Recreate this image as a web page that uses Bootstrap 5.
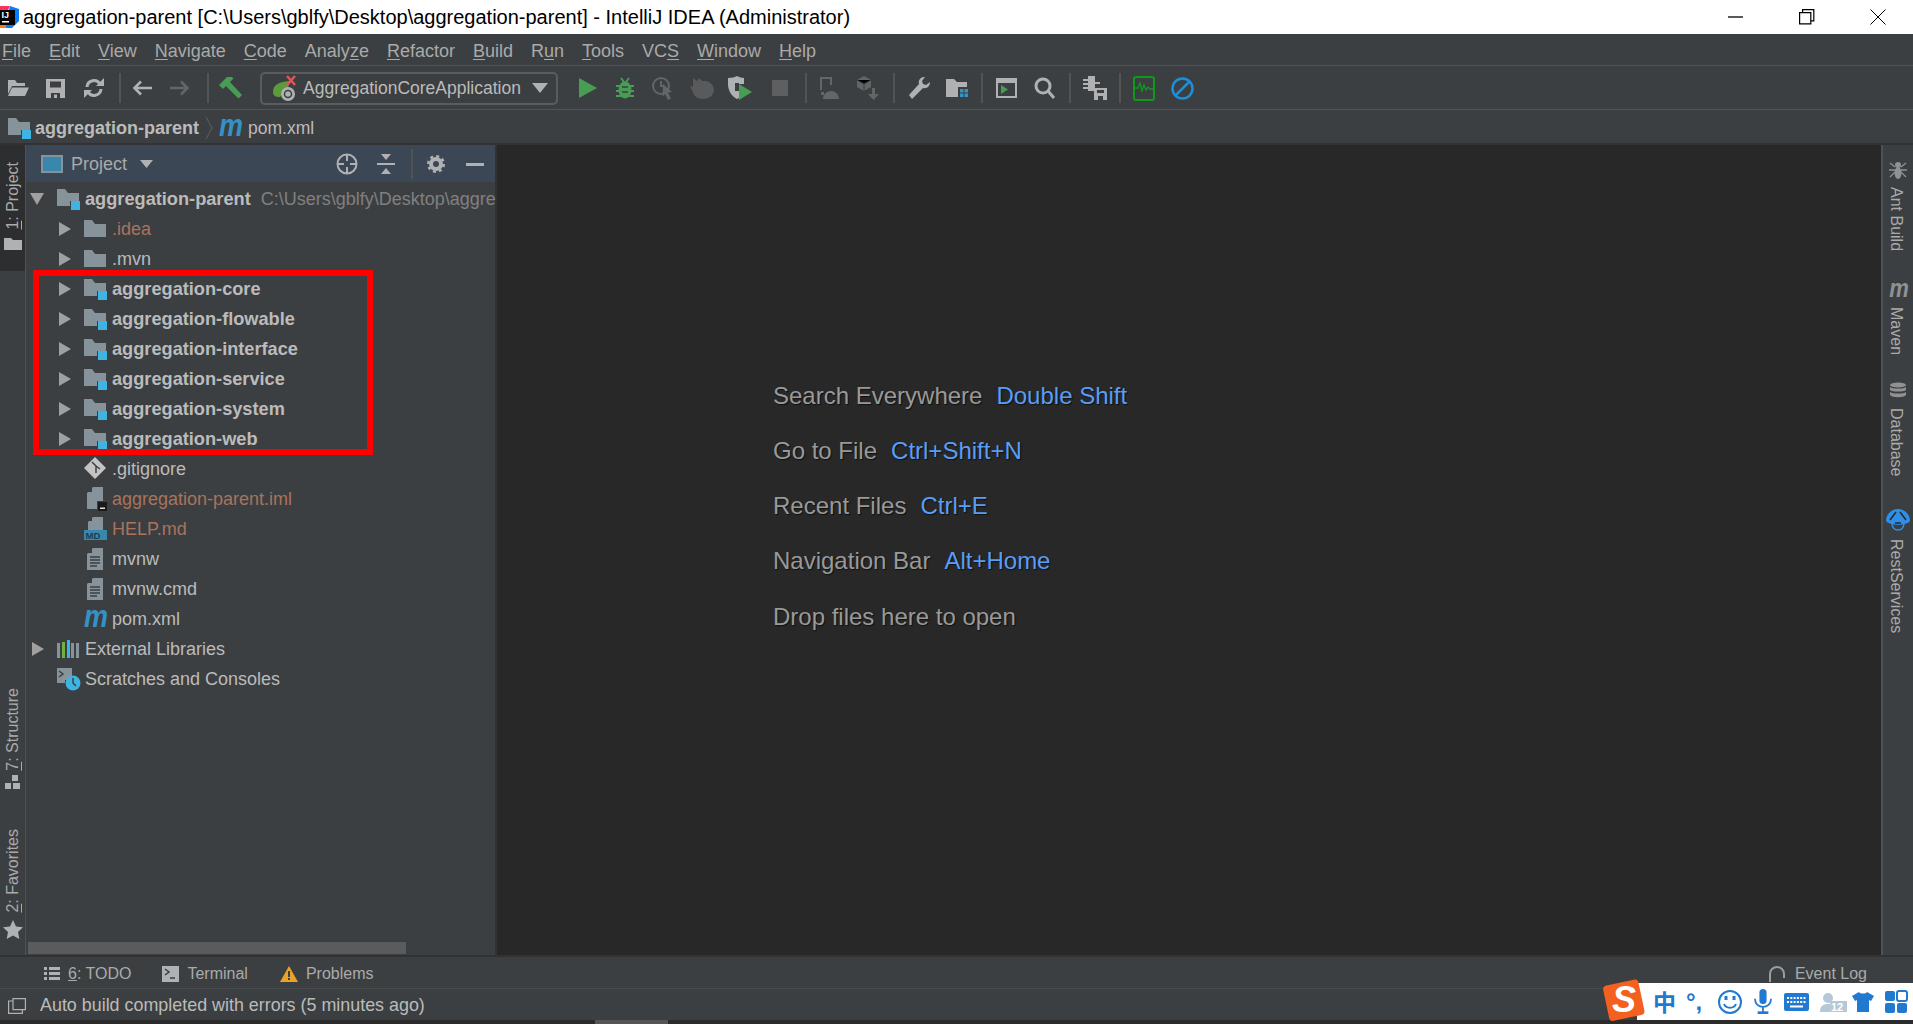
<!DOCTYPE html>
<html lang="en">
<head>
<meta charset="UTF-8">
<title>aggregation-parent - IntelliJ IDEA</title>
<link href="https://cdn.jsdelivr.net/npm/bootstrap@5.3.0/dist/css/bootstrap.min.css" rel="stylesheet">
<style>
body { background: #3c3f41; color: #bbb; font-family: "Liberation Sans", Arial, sans-serif; font-size: 18px; }
svg { display: block; flex: none; overflow: visible; }
.title-bar { height: 34px; background: #fff; color: #000; font-size: 20px; }
.title-bar .win { width: 71px; }
.menu-bar { height: 32px; border-bottom: 1px solid #515354; font-size: 18px; color: #aaa; gap: 18px; padding: 3px 0 0 2px; }
.menu-bar u { text-underline-offset: 2px; }
.tool-bar { height: 44px; border-bottom: 1px solid #515354; padding-top: 1px; }
.tb { height: 100%; display: flex; align-items: center; justify-content: center; }
.w32 { width: 32px; } .w34 { width: 34px; } .w36 { width: 36px; } .w38 { width: 38px; } .w40 { width: 40px; } .w44 { width: 44px; }
.sep { width: 2px; height: 30px; background: #515354; margin: 0 5px; flex: none; }
.combo { width: 298px; height: 33px; border: 2px solid #5a5d5f; border-radius: 5px; margin-left: 12px; margin-right: 12px; padding-left: 10px; font-size: 17.5px; color: #bbb; flex: none; }
.nav-strip { height: 30px; padding: 3px 0 0 8px; border-bottom: 2px solid #323232; box-sizing: content-box; font-size: 18px; }
.nav-strip b { margin-left: 3px; }
.nav-strip span { font-size: 17.5px; }
.nav-chevron { margin-left: 6px; margin-right: 6px; }
.nav-m { margin-right: 3px; }
.main-area { min-height: 0; }
.left-strip { width: 26px; border-right: 1px solid #4f5254; flex: none; }
.right-strip { width: 32px; border-left: 2px solid #4f5254; flex: none; padding-top: 16px; padding-left: 6px; }
.side-btn { writing-mode: vertical-rl; font-size: 16px; color: #aaa; line-height: 20px; white-space: nowrap; }
.left-strip .side-btn { transform: rotate(180deg); }
.right-strip .side-btn { margin-left: -3px; }
.left-active { background: #2c2e2f; padding-top: 17px; height: 126px; }
.struct-ico { margin-top: 5px; }
.fav-gap { margin-top: 40px; }
.star { margin-top: 7px; }
.r-maven { margin: 30px 0 8px; }
.r-db { margin: 27px 0 8px; }
.r-rest { margin: 32px 0 8px -3px; }
.panel { width: 471px; flex: none; border-right: 2px solid #323232; }
.panel-head { height: 37px; background: #3c4755; padding: 1px 0 0 15px; font-size: 18px; color: #aaa; }
.head-caret { margin-left: 13px; }
.head-locate { margin-left: 183px; }
.head-collapse { margin-left: 19px; }
.head-sep { margin: 0 14px 0 16px; }
.head-min { margin-left: 21px; }
.tree { padding-top: 2px; }
.tree li { height: 30px; white-space: nowrap; }
.tree b { font-size: 18.2px; padding-top: 1px; }
.lv0 { padding-left: 4px; }
.lv0-plain { padding-left: 31px; }
.lv1 { padding-left: 33px; }
.leaf { padding-left: 58px; }
.arr { width: 25px; flex: none; }
.lv0 .arr { width: 27px; }
.ico { width: 28px; flex: none; }
.muted-path { color: #808080; margin-left: 10px; }
.ignored { color: #a9735d; }
.mark-box { position: absolute; left: 7px; top: 88px; width: 340px; height: 185px; border: 6px solid #f00; pointer-events: none; }
.h-scroll { height: 12px; width: 378px; background: #595b5d; margin: auto 0 1px 2px; }
.editor { background: #282828; padding: 222.5px 0 0 276px; font-size: 24px; color: #999; text-shadow: 1px 1px 1px #111; }
.editor p { height: 55.3px; line-height: 55.3px; margin: 0; }
.editor span { color: #589df6; margin-left: 14px; }
.bottom-bar { height: 33px; border-top: 2px solid #323232; font-size: 16px; color: #aaa; padding: 2px 0 0 44px; flex: none; }
.bottom-gap { margin-left: 31px; }
.bottom-gap-2 { margin-left: 32px; }
.status-bar { height: 32px; border-top: 1px solid #494b4d; padding: 2px 0 0 8px; font-size: 17.9px; flex: none; }
.status-text { margin-left: 14px; }
.floor { height: 4px; background: #2b2b2b; flex: none; padding-left: 595px; }
.floor div { width: 73px; background: #555; }
.event-log { margin-left: auto; margin-right: 46px; }
.sogou { position: absolute; right: 0; bottom: 4px; width: 276px; height: 37px; background: #fff; color: #2179d0; padding-left: 16px; gap: 11px; }
.sogou b { font-family: "Noto Sans CJK SC", sans-serif; font-size: 23px; width: 22px; line-height: 1; }
.sogou .punct { width: 21px; font-size: 24px; font-weight: 700; line-height: 1; white-space: nowrap; }
.sogou .shirt { margin-left: -6px; }
.sogou-logo { position: absolute; left: -34px; top: -4px; }
</style>
</head>
<body class="vh-100 overflow-hidden d-flex flex-column position-relative">

<svg width="0" height="0" class="position-absolute">
  <symbol id="module" viewBox="0 0 24 22"><path fill="#87939a" d="M0 1H8l3 4h11v8H13v5H0z"/><rect x="14" y="13" width="9" height="9" fill="#3fb4e3"/></symbol>
  <symbol id="folder" viewBox="0 0 24 22"><path fill="#87939a" d="M0 2H8l3 4h11v13H0z"/></symbol>
  <symbol id="right" viewBox="0 0 12 14"><path fill="#a0a0a0" d="M0 0l12 7-12 7z"/></symbol>
  <symbol id="doc" viewBox="0 0 24 24"><path fill="#87939a" d="M3 7L9 1h10v22H3z"/><path fill="#3c3f41" d="M3 6L8 1v5z"/><path stroke="#3c3f41" stroke-width="1.600" d="M6 10h10M6 13h10M6 16h10M6 19h7"/></symbol>
</svg>

<header class="title-bar d-flex align-items-center flex-none">
  <svg width="19" height="22" viewBox="0 0 19 22">
    <path fill="#fe315d" d="M0 0h10L4 12H0z"/><path fill="#087cfa" d="M10 0l9 3v12l-7 7H4z"/><path fill="#f97a12" d="M0 12h6v10H0z"/>
    <rect x="0" y="4" width="15" height="15" fill="#000"/><rect x="2" y="15" width="7" height="1.500" fill="#fff"/>
    <text x="1.500" y="12" fill="#fff" font-size="9" font-weight="700" font-family="Liberation Sans">IJ</text>
  </svg>
  <span class="ms-1 text-nowrap">aggregation-parent [C:\Users\gblfy\Desktop\aggregation-parent] - IntelliJ IDEA (Administrator)</span>
  <div class="ms-auto d-flex align-items-center">
    <div class="win d-flex justify-content-center"><svg width="16" height="16"><path stroke="#000" stroke-width="1.300" d="M0 8h15"/></svg></div>
    <div class="win d-flex justify-content-center"><svg width="16" height="16" fill="none" stroke="#000" stroke-width="1.200"><path d="M.6 3.600h11.200v11.200H.6zM3.600 3.400V.6h11.200v11.200h-3"/></svg></div>
    <div class="win d-flex justify-content-center"><svg width="16" height="16" stroke="#000" stroke-width="1"><path d="M.5.5l15 15M15.500.5l-15 15"/></svg></div>
  </div>
</header>

<nav class="menu-bar d-flex align-items-center flex-none">
  <span><u>F</u>ile</span><span><u>E</u>dit</span><span><u>V</u>iew</span><span><u>N</u>avigate</span><span><u>C</u>ode</span><span>Analy<u>z</u>e</span><span><u>R</u>efactor</span><span><u>B</u>uild</span><span>R<u>u</u>n</span><span><u>T</u>ools</span><span>VC<u>S</u></span><span><u>W</u>indow</span><span><u>H</u>elp</span>
</nav>

<div class="tool-bar d-flex align-items-center flex-none">
  <div class="tb w36"><svg width="22" height="18" viewBox="0 0 22 18"><path fill="#afb1b3" d="M1 1h7l2 3h8v3H5L1 15z"/><path fill="#afb1b3" d="M5 8.500h17L18 17H1z"/></svg></div>
  <div class="tb w38"><svg width="19" height="19" viewBox="0 0 19 19"><path fill="#afb1b3" d="M0 0h19v19H0z"/><path fill="#3c3f41" d="M4 2.500h11v6H4zM5 14h9v5H5z"/><path fill="#afb1b3" d="M8 15.500h3V19H8z"/></svg></div>
  <div class="tb w40"><svg width="20" height="20" viewBox="0 0 20 20" fill="none" stroke="#afb1b3" stroke-width="3"><path d="M3 9a7 7 0 0 1 13-3M17 11a7 7 0 0 1-13 3"/><path fill="#afb1b3" stroke="none" d="M12 8h8V0zM8 12H0v8z"/></svg></div>
  <div class="sep"></div>
  <div class="tb w32"><svg width="20" height="16" viewBox="0 0 20 16" fill="none" stroke="#afb1b3" stroke-width="2.600"><path d="M20 8H3M9 1.500L2.500 8 9 14.500"/></svg></div>
  <div class="tb w44"><svg width="20" height="16" viewBox="0 0 20 16" fill="none" stroke="#636567" stroke-width="2.600"><path d="M0 8h17M11 1.500L17.500 8 11 14.500"/></svg></div>
  <div class="sep"></div>
  <div class="tb w34"><svg width="24" height="24" viewBox="0 0 24 24"><path fill="#499c54" d="M0 9L8 1l5 0 1.500 1.500L12 5l-1 1L23 19l-3.500 3.500L7 10 4 13z"/></svg></div>
  <div class="combo d-flex align-items-center">
    <svg width="27" height="27" viewBox="0 0 27 27"><path fill="#5c9a3c" d="M1 17C1 9 8 7 17 6c1 5-2 8-4 10l-5 6C4 22 1 21 1 17z"/><path stroke="#e05555" stroke-width="2.600" d="M15 1l8 9M23 1l-8 9"/><circle cx="16" cy="19" r="7" fill="#afb1b3"/><circle cx="16" cy="19" r="3.500" fill="none" stroke="#3c3f41" stroke-width="1.500"/></svg>
    <span class="ms-1 flex-grow-1 text-nowrap">AggregationCoreApplication</span>
    <svg width="16" height="10" class="me-2"><path fill="#afb1b3" d="M0 0h16l-8 10z"/></svg>
  </div>
  <div class="tb w36"><svg width="18" height="20"><path fill="#499c54" d="M0 0l18 10L0 20z"/></svg></div>
  <div class="tb w38"><svg width="18" height="21" viewBox="0 0 18 21"><g stroke="#499c54" stroke-width="2"><path d="M5 0l3 4M13 0l-3 4M0 8h18M0 13h18M0 18h18"/></g><ellipse cx="9" cy="12" rx="6.500" ry="8.500" fill="#499c54"/><path stroke="#3c3f41" stroke-width="1.500" d="M6 9h6M6 14h6"/></svg></div>
  <div class="tb w40"><svg width="24" height="24" viewBox="0 0 24 24"><circle cx="9" cy="10" r="8" fill="none" stroke="#636567" stroke-width="2"/><path stroke="#636567" stroke-width="2" fill="none" d="M9 5v5h3"/><path fill="#636567" d="M11 8l9 8-4 .5 3 6-3 1.500-3-6-2.500 3z"/></svg></div>
  <div class="tb w36"><svg width="25" height="22" viewBox="0 0 25 22"><path fill="#585a5c" d="M3 1l4 3 2-3 3 3 4 0c5 1 8 5 8 9 0 5-5 9-11 9-6 0-9-3-10-7L0 9l3 1z"/></svg></div>
  <div class="tb w40"><svg width="24" height="24" viewBox="0 0 24 24"><path fill="#afb1b3" d="M0 2c4 0 7-1 9-2 2 1 5 2 7 2v6h-5v7l2 6-4 2C3 20 0 14 0 8z"/><path fill="#3c3f41" d="M7 7h4v8H7z"/><path fill="#499c54" d="M11 8l13 8-13 8z"/></svg></div>
  <div class="tb w40"><svg width="16" height="16"><rect width="16" height="16" fill="#5d5f61"/></svg></div>
  <div class="sep"></div>
  <div class="tb w36"><svg width="20" height="22" viewBox="0 0 20 22"><path fill="none" stroke="#636567" stroke-width="2" d="M1 13V1h10v7"/><path fill="#636567" d="M3 22c0-5 4-8 8-8s8 3 8 8zM1 15h3v3H1z"/></svg></div>
  <div class="tb w40"><svg width="22" height="24" viewBox="0 0 22 24"><path fill="#636567" d="M7 0l7 4v7l-7 4-7-4V4z"/><path stroke="#3c3f41" d="M0 4l7 4 7-4M7 8v7"/><path fill="#636567" d="M15 12h3v6h4l-5.500 6L11 18h4z"/></svg></div>
  <div class="sep"></div>
  <div class="tb w38"><svg width="21" height="22" viewBox="0 0 21 22"><path fill="#afb1b3" d="M15 0c-4 0-6 4-5 7L0 18l3 4L14 11c4 1 7-2 7-6l-4 3-3-1-1-3 3-4z"/></svg></div>
  <div class="tb w38"><svg width="22" height="20" viewBox="0 0 22 20"><path fill="#afb1b3" d="M0 1h8l3 3h10v5h-9v10H0z"/><path fill="#3592c4" d="M14 11h3.500v3.500H14zM18.500 11H22v3.500h-3.500zM14 15.500h3.500V19H14zM18.500 15.500H22V19h-3.500z"/></svg></div>
  <div class="sep"></div>
  <div class="tb w36"><svg width="21" height="20" viewBox="0 0 21 20"><rect x="1" y="1" width="19" height="18" fill="none" stroke="#afb1b3" stroke-width="2"/><rect x="1" y="1" width="19" height="4" fill="#afb1b3"/><path fill="#499c54" d="M5 7l7 4.500L5 16z"/></svg></div>
  <div class="tb w40"><svg width="21" height="22" viewBox="0 0 21 22" fill="none" stroke="#afb1b3" stroke-width="3"><circle cx="9" cy="9" r="7"/><path d="M14 14l6 7"/></svg></div>
  <div class="sep"></div>
  <div class="tb w38"><svg width="24" height="24" viewBox="0 0 24 24"><path fill="#afb1b3" d="M5 0h7v15H5zM0 3h5v2H0zM0 7h5v2H0zM0 11h5v2H0zM12 6h5v2h-5z"/><path fill="#afb1b3" d="M11 12h13v12H11z"/><path fill="#3c3f41" d="M14 14h7v3h-7zM15 20h5v4h-5z"/></svg></div>
  <div class="sep"></div>
  <div class="tb w36"><svg width="22" height="25" viewBox="0 0 22 25"><rect x="1" y="1" width="20" height="23" rx="2" fill="none" stroke="#0e9a18" stroke-width="2"/><path fill="none" stroke="#0e9a18" stroke-width="1.300" d="M2 12h3l2-5 2 8 2-6 2 5 2-3 2 2h3"/></svg></div>
  <div class="tb w40"><svg width="23" height="23" viewBox="0 0 23 23" fill="none" stroke="#1a8fdc" stroke-width="2.500"><circle cx="11.500" cy="11.500" r="10"/><path d="M5 18L18 5"/></svg></div>
</div>

<div class="nav-strip d-flex align-items-center flex-none">
  <svg width="24" height="22"><use href="#module"/></svg>
  <b>aggregation-parent</b>
  <svg width="8" height="22" class="nav-chevron" fill="none" stroke="#5e6163"><path d="M1 0l6 11L1 22"/></svg>
  <svg width="26" height="22" class="nav-m"><text x="0" y="19" fill="#3592c4" font-family="Liberation Sans" font-weight="700" font-style="italic" font-size="32" textLength="24" lengthAdjust="spacingAndGlyphs">m</text></svg>
  <span>pom.xml</span>
</div>

<div class="main-area flex-grow-1 d-flex">
  <aside class="left-strip d-flex flex-column">
    <div class="left-active d-flex flex-column align-items-center">
      <div class="side-btn"><u>1</u>: Project</div>
      <svg width="18" height="12" class="mt-2" viewBox="0 0 18 12"><path fill="#afb1b3" d="M0 0h7l2 2h9v10H0z"/></svg>
    </div>
    <div class="d-flex flex-column align-items-center mt-auto pb-3">
      <div class="side-btn"><u>7</u>: Structure</div>
      <svg width="15" height="14" class="struct-ico" viewBox="0 0 15 14"><path fill="#afb1b3" d="M7 0h6v6H7zM0 8h6v6H0zM8 8h7v6H8z"/></svg>
      <div class="side-btn fav-gap"><u>2</u>: Favorites</div>
      <svg width="20" height="19" class="star" viewBox="0 0 20 19"><path fill="#afb1b3" d="M10 0l3 6.500 7 .800-5 4.700 1.300 7L10 15.500 3.700 19 5 12 0 7.300l7-.8z"/></svg>
    </div>
  </aside>

  <section class="panel d-flex flex-column">
    <div class="panel-head d-flex align-items-center flex-none">
      <svg width="22" height="18" viewBox="0 0 22 18"><rect x="1" y="1" width="20" height="16" fill="#3a87ad" stroke="#87939a" stroke-width="2"/></svg>
      <span class="ms-2">Project</span>
      <svg width="13" height="8" class="head-caret"><path fill="#afb1b3" d="M0 0h13l-6.500 8z"/></svg>
      <svg width="22" height="22" class="head-locate" viewBox="0 0 22 22" fill="none" stroke="#afb1b3" stroke-width="2"><circle cx="11" cy="11" r="9.500"/><path d="M11 1v7M11 14v7M1 11h7M14 11h7"/></svg>
      <svg width="18" height="20" class="head-collapse" viewBox="0 0 18 20"><path fill="#afb1b3" d="M0 9h18v2H0zM4 0h10L9 6zM4 20h10l-5-6z"/></svg>
      <div class="sep head-sep"></div>
      <svg width="18" height="18" viewBox="0 0 18 18" fill="none" stroke="#afb1b3"><circle cx="9" cy="9" r="5" stroke-width="4"/><circle cx="9" cy="9" r="7.800" stroke-width="2.500" stroke-dasharray="3 3.120"/></svg>
      <svg width="18" height="3" class="head-min"><path fill="#afb1b3" d="M0 0h18v3H0z"/></svg>
    </div>
    <div class="tree position-relative flex-grow-1 d-flex flex-column">
      <ul class="list-unstyled mb-0">
        <li class="lv0 d-flex align-items-center">
          <svg class="arr" height="12" viewBox="0 0 27 12"><path fill="#a0a0a0" d="M0 0h14L7 12z"/></svg>
          <svg class="ico" height="22" viewBox="0 0 28 22"><use href="#module" width="24" height="22"/></svg>
          <b>aggregation-parent</b><span class="muted-path">C:\Users\gblfy\Desktop\aggre</span>
        </li>
        <li class="lv1 d-flex align-items-center"><svg class="arr" height="14" viewBox="0 0 25 14"><use href="#right" width="12" height="14"/></svg><svg class="ico" height="22" viewBox="0 0 28 22"><use href="#folder" width="24" height="22"/></svg><span class="ignored">.idea</span></li>
        <li class="lv1 d-flex align-items-center"><svg class="arr" height="14" viewBox="0 0 25 14"><use href="#right" width="12" height="14"/></svg><svg class="ico" height="22" viewBox="0 0 28 22"><use href="#folder" width="24" height="22"/></svg><span>.mvn</span></li>
        <li class="lv1 d-flex align-items-center"><svg class="arr" height="14" viewBox="0 0 25 14"><use href="#right" width="12" height="14"/></svg><svg class="ico" height="22" viewBox="0 0 28 22"><use href="#module" width="24" height="22"/></svg><b>aggregation-core</b></li>
        <li class="lv1 d-flex align-items-center"><svg class="arr" height="14" viewBox="0 0 25 14"><use href="#right" width="12" height="14"/></svg><svg class="ico" height="22" viewBox="0 0 28 22"><use href="#module" width="24" height="22"/></svg><b>aggregation-flowable</b></li>
        <li class="lv1 d-flex align-items-center"><svg class="arr" height="14" viewBox="0 0 25 14"><use href="#right" width="12" height="14"/></svg><svg class="ico" height="22" viewBox="0 0 28 22"><use href="#module" width="24" height="22"/></svg><b>aggregation-interface</b></li>
        <li class="lv1 d-flex align-items-center"><svg class="arr" height="14" viewBox="0 0 25 14"><use href="#right" width="12" height="14"/></svg><svg class="ico" height="22" viewBox="0 0 28 22"><use href="#module" width="24" height="22"/></svg><b>aggregation-service</b></li>
        <li class="lv1 d-flex align-items-center"><svg class="arr" height="14" viewBox="0 0 25 14"><use href="#right" width="12" height="14"/></svg><svg class="ico" height="22" viewBox="0 0 28 22"><use href="#module" width="24" height="22"/></svg><b>aggregation-system</b></li>
        <li class="lv1 d-flex align-items-center"><svg class="arr" height="14" viewBox="0 0 25 14"><use href="#right" width="12" height="14"/></svg><svg class="ico" height="22" viewBox="0 0 28 22"><use href="#module" width="24" height="22"/></svg><b>aggregation-web</b></li>
        <li class="leaf d-flex align-items-center">
          <svg class="ico" height="24" viewBox="0 0 28 24"><path fill="#c4c4c4" d="M11 0l11 11-11 11L0 11z"/><path stroke="#3c3f41" stroke-width="1.500" fill="none" d="M8 5l4 4v7M12 9l4 3"/></svg><span>.gitignore</span>
        </li>
        <li class="leaf d-flex align-items-center">
          <svg class="ico" height="24" viewBox="0 0 28 24"><path fill="#87939a" d="M3 6L9 0h10v14h-6v8H3z"/><path fill="#3c3f41" d="M3 5l5-5v5z"/><rect x="14" y="15" width="9" height="9" fill="#1a1a1a"/><rect x="16" y="20.500" width="5" height="1.500" fill="#ddd"/></svg><span class="ignored">aggregation-parent.iml</span>
        </li>
        <li class="leaf d-flex align-items-center">
          <svg class="ico" height="24" viewBox="0 0 28 24"><path fill="#87939a" d="M4 5L9 0h10v13H4z"/><path fill="#3c3f41" d="M4 4l4-4v4z"/><rect x="0" y="13" width="23" height="10" fill="#3a87ad"/><text x="1.500" y="21.800" font-size="9.500" font-weight="700" fill="#1e3d50" font-family="Liberation Sans">MD</text></svg><span class="ignored">HELP.md</span>
        </li>
        <li class="leaf d-flex align-items-center"><svg class="ico" height="24" viewBox="0 0 28 24"><use href="#doc" width="24" height="24"/></svg><span>mvnw</span></li>
        <li class="leaf d-flex align-items-center"><svg class="ico" height="24" viewBox="0 0 28 24"><use href="#doc" width="24" height="24"/></svg><span>mvnw.cmd</span></li>
        <li class="leaf d-flex align-items-center"><svg class="ico" height="22" viewBox="0 0 28 22"><text x="0" y="19" fill="#3592c4" font-family="Liberation Sans" font-weight="700" font-style="italic" font-size="32" textLength="24" lengthAdjust="spacingAndGlyphs">m</text></svg><span>pom.xml</span></li>
        <li class="lv0 d-flex align-items-center">
          <svg class="arr" height="14" viewBox="0 0 27 14"><use href="#right" x="2" width="12" height="14"/></svg>
          <svg class="ico" height="20" viewBox="0 0 28 20"><path fill="#87939a" d="M0 4h3v15H0zM14 4h3v15h-3zM19 4h3v15h-3z"/><rect x="5" y="3" width="3" height="16" fill="#6fb33f"/><rect x="10" y="1" width="3" height="18" fill="#3fb4e3"/></svg>
          <span>External Libraries</span>
        </li>
        <li class="lv0-plain d-flex align-items-center">
          <svg class="ico" height="24" viewBox="0 0 28 24"><path fill="#87939a" d="M0 1h15v12H8v3H0z"/><path stroke="#3c3f41" stroke-width="1.500" fill="none" d="M2 4l4 3-4 3"/><circle cx="16" cy="16" r="7.500" fill="#3fb4e3"/><path stroke="#3c3f41" stroke-width="1.500" fill="none" d="M16 11v5l3 3"/></svg>
          <span>Scratches and Consoles</span>
        </li>
      </ul>
      <div class="mark-box"></div>
      <div class="h-scroll flex-none"></div>
    </div>
  </section>

  <main class="editor flex-grow-1">
    <p>Search Everywhere<span>Double Shift</span></p>
    <p>Go to File<span>Ctrl+Shift+N</span></p>
    <p>Recent Files<span>Ctrl+E</span></p>
    <p>Navigation Bar<span>Alt+Home</span></p>
    <p>Drop files here to open</p>
  </main>

  <aside class="right-strip d-flex flex-column align-items-start">
    <svg width="18" height="18" viewBox="0 0 18 18" class="mb-2"><g stroke="#8f9193" stroke-width="1.300" fill="none"><path d="M1 2l5 4M17 2l-5 4M0 9h18M1 16l5-5M17 16l-5-5"/></g><ellipse cx="9" cy="4" rx="3" ry="3" fill="#8f9193"/><ellipse cx="9" cy="12" rx="3.500" ry="6" fill="#8f9193"/></svg>
    <div class="side-btn">Ant Build</div>
    <svg width="22" height="18" class="r-maven" viewBox="0 0 26 22"><text x="0" y="19" fill="#8f9193" font-family="Liberation Sans" font-weight="700" font-style="italic" font-size="32" textLength="24" lengthAdjust="spacingAndGlyphs">m</text></svg>
    <div class="side-btn">Maven</div>
    <svg width="18" height="18" viewBox="0 0 18 18" class="r-db"><g fill="#8f9193"><ellipse cx="9" cy="3" rx="8" ry="2.500"/><path d="M1 5c2 2 14 2 16 0v3c-2 2-14 2-16 0zM1 10c2 2 14 2 16 0v3c-2 3-14 3-16 0z"/></g></svg>
    <div class="side-btn">Database</div>
    <svg width="24" height="22" viewBox="0 0 24 22" class="r-rest"><path fill="#2f8fe8" d="M12 0C5 0 0 6 0 12c4 5 20 5 24 0C24 6 19 0 12 0z"/><path fill="none" stroke="#2f8fe8" stroke-width="1.500" d="M6 15c1 8 11 8 12 0"/><path fill="none" stroke="#282828" stroke-width="1.500" d="M4 11l6-8M20 11l-6-8M9 14h6"/></svg>
    <div class="side-btn">RestServices</div>
  </aside>
</div>

<footer class="bottom-bar d-flex align-items-center">
  <svg width="16" height="13" viewBox="0 0 16 13"><path fill="#afb1b3" d="M0 0h3v3H0zM5 0h11v3H5zM0 5h3v3H0zM5 5h11v3H5zM0 10h3v3H0zM5 10h11v3H5z"/></svg>
  <span class="ms-2"><u>6</u>: TODO</span>
  <svg width="17" height="16" viewBox="0 0 17 16" class="bottom-gap"><rect width="17" height="16" fill="#afb1b3"/><path stroke="#3c3f41" stroke-width="1.500" fill="none" d="M3 3l4 3-4 3M8 12h5"/></svg>
  <span class="ms-2">Terminal</span>
  <svg width="18" height="16" viewBox="0 0 18 16" class="bottom-gap-2"><path fill="#eaa229" d="M9 0l9 16H0z"/><path fill="#3c3f41" d="M8 5h2v6H8zM8 12h2v2H8z"/></svg>
  <span class="ms-2">Problems</span>
  <div class="event-log d-flex align-items-center">
    <svg width="20" height="20" viewBox="0 0 20 20" fill="none" stroke="#9a9c9e" stroke-width="2"><path d="M3 18L3 10a7 7 0 1 1 14 0v4"/></svg>
    <span class="ms-2">Event Log</span>
  </div>
</footer>

<div class="status-bar d-flex align-items-center">
  <svg width="18" height="16" viewBox="0 0 18 16" fill="none" stroke="#afb1b3" stroke-width="1.200"><path d="M5 .6h12.400v11H5zM5 3H.6v12.400h13.800v-3.800"/></svg>
  <span class="text-nowrap status-text">Auto build completed with errors (5 minutes ago)</span>
</div>
<div class="floor d-flex"><div></div></div>

<div class="sogou d-flex align-items-center">
  <svg class="sogou-logo" width="44" height="44" viewBox="0 0 44 44"><rect x="3" y="3" width="36" height="36" rx="4" fill="#f4601f" transform="rotate(-12 22 22)"/><text x="9" y="33" font-family="Liberation Sans" font-size="36" font-weight="700" font-style="italic" fill="#fff">S</text></svg>
  <b>中</b>
  <span class="punct">°,</span>
  <svg width="24" height="24" viewBox="0 0 24 24" fill="none" stroke="#2179d0" stroke-width="2"><circle cx="12" cy="12" r="11"/><path d="M6 14c2 5 10 5 12 0"/><path stroke-width="3" d="M8 6v4M16 6v4"/></svg>
  <svg width="20" height="25" viewBox="0 0 20 28" fill="#2179d0"><rect x="6" y="0" width="8" height="17" rx="4"/><path fill="none" stroke="#2179d0" stroke-width="2" d="M1 11c0 12 18 12 18 0M10 20v6"/><path d="M4 25h12v3H4z"/></svg>
  <svg width="25" height="18" viewBox="0 0 25 18"><rect width="25" height="18" rx="2" fill="#2179d0"/><path stroke="#fff" stroke-width="2" stroke-dasharray="2 1.300" d="M3 5h19M3 9h19"/><path stroke="#fff" stroke-width="2" d="M6 13.500h13"/></svg>
  <svg width="27" height="20" viewBox="0 0 27 20"><circle cx="8" cy="6" r="5" fill="#b6c8d8"/><path fill="#b6c8d8" d="M0 20c0-6 3-8 8-8s4 2 4 8z"/><rect x="10" y="9" width="17" height="11" fill="#b6c8d8"/><text x="11" y="19" font-size="11" font-weight="700" fill="#fff" font-family="Liberation Sans">12</text></svg>
  <svg class="shirt" width="22" height="20" viewBox="0 0 22 20"><path fill="#2179d0" d="M7 0c1 2 7 2 8 0l7 4-3 5-2-1v12H5V8L3 9 0 4z"/></svg>
  <svg width="22" height="22" viewBox="0 0 22 22" fill="#2179d0"><rect width="10" height="10" rx="2"/><rect x="12" y="0" width="10" height="10" rx="2" fill="none" stroke="#2179d0" stroke-width="2"/><rect y="12" width="10" height="10" rx="2"/><rect x="12" y="12" width="10" height="10" rx="2"/></svg>
</div>

<script src="https://cdn.jsdelivr.net/npm/bootstrap@5.3.0/dist/js/bootstrap.bundle.min.js"></script>
</body>
</html>
